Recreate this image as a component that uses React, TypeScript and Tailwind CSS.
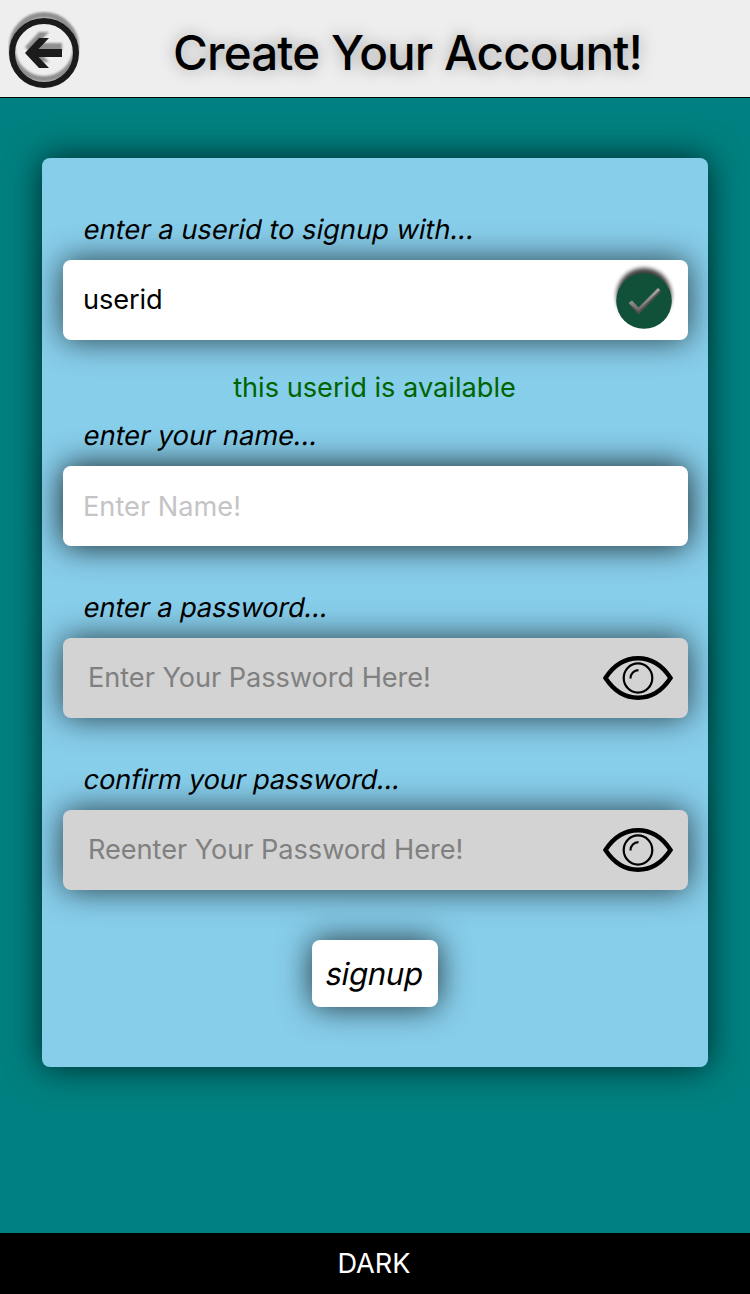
import type { ReactNode } from "react";

function BackIcon() {
  return (
    <svg className="ml-2 mt-[11px] h-[78px] w-[72px] shrink-0" viewBox="0 0 72 78" aria-label="Back">
      <defs>
        <filter id="soft" x="-20%" y="-20%" width="140%" height="140%">
          <feGaussianBlur stdDeviation="0.9" />
        </filter>
      </defs>
      <g fill="#777" stroke="#777" opacity="0.8" filter="url(#soft)">
        <circle cx="36" cy="36" r="32" fill="none" strokeWidth="6" />
        <path stroke="none" d="M17 36 31 21H41L30.500 32H54V40H30.500L41 51H31Z" />
      </g>
      <circle cx="36" cy="42" r="32" fill="none" stroke="#1b1b1b" strokeWidth="6" />
      <path fill="#1b1b1b" d="M17 42 31 27H41L30.500 38H54V46H30.500L41 57H31Z" />
    </svg>
  );
}

function CheckIcon() {
  return (
    <svg className="mr-2.5 h-[80px] w-[68px] shrink-0" viewBox="0 0 68 80" aria-label="Available">
      <defs>
        <filter id="checkShadow" x="-20%" y="-20%" width="140%" height="140%">
          <feGaussianBlur stdDeviation="2" />
        </filter>
        <linearGradient id="checkFill" x1="0.3" y1="0.2" x2="0.5" y2="1">
          <stop offset="0" stopColor="#aaa" />
          <stop offset="1" stopColor="#606060" />
        </linearGradient>
      </defs>
      <circle cx="34" cy="35.500" r="27.500" fill="#000" opacity="0.75" filter="url(#checkShadow)" />
      <circle cx="34" cy="41" r="27.800" fill="#115039" />
      <path d="M18.500 43.500 22 40.500 28.500 47.500 48 28 51.500 31.500 28.500 54.500Z" fill="#505050" />
      <path d="M18.500 43 22 40.500 28.500 47.500 48 28 50 30 28.500 51.500Z" fill="url(#checkFill)" />
    </svg>
  );
}

function EyeIcon() {
  return (
    <svg className="mr-[15px] h-11 w-[70px] shrink-0" viewBox="0 0 70 44" fill="none" stroke="#000" aria-label="Show password">
      <path d="M2.500 22C11 9 22 2.300 35 2.300S59 9 67.500 22C59 35 48 41.700 35 41.700S11 35 2.500 22Z" strokeWidth="4.400" />
      <ellipse cx="35" cy="22" rx="14.300" ry="14.600" strokeWidth="2.200" />
      <path d="M27.500 22.500C27.500 17.500 31 14.200 35.500 14.200" strokeWidth="2.200" />
    </svg>
  );
}

function Label({ children, className }: { children: ReactNode; className: string }) {
  return (
    <div className={`flex h-[62px] items-center pl-[19px] pt-0.5 text-[27.2px] ${className}`}>
      <span className="origin-[0_75%] -skew-x-[11deg]">{children}</span>
    </div>
  );
}

function Field({ children, className }: { children: ReactNode; className: string }) {
  return (
    <div className={`flex h-20 items-center justify-between rounded-[8px] text-[27.2px] ${className}`}>
      {children}
    </div>
  );
}

export default function App() {
  return (
    <div className="flex h-[1294px] w-[750px] flex-col overflow-hidden bg-[#008080] font-['Inter','Liberation_Sans',sans-serif] text-black">
      <header className="flex h-[98px] shrink-0 border-b border-black bg-[#eee]">
        <BackIcon />
        <h1 className="ml-[93px] mt-[18px] whitespace-nowrap text-[47.6px] font-medium leading-[70px] tracking-[-0.88px] [text-shadow:0_0_16px_rgba(0,0,0,0.35)]">
          Create Your Account!
        </h1>
      </header>
      <main className="flex-1 px-[42px] pt-[60px]">
        <section className="flex h-[909px] flex-col rounded-[8px] bg-[#87ceeb] pl-[21px] pr-[20px] pt-10 shadow-[0_0_34px_rgba(0,0,0,0.7)]">
          <Label className="tracking-[0.05px]">enter a userid to signup with...</Label>
          <Field className="bg-white pl-5 shadow-[0_0_32px_rgba(0,0,0,0.7)]">
            <span className="tracking-[-0.1px]">userid</span>
            <CheckIcon />
          </Field>
          <p className="mt-[25px] h-[45px] pr-0.5 text-center text-[27.2px] leading-[46px] text-[#006400]">this userid is available</p>
          <div className="-mt-[6px]">
            <Label className="">enter your name...</Label>
          </div>
          <Field className="bg-white pl-5 pt-0.5 text-[#c4c4c6] shadow-[0_0_32px_rgba(0,0,0,0.85)]">Enter Name!</Field>
          <Label className="mt-[30px] tracking-[-0.1px]">enter a password...</Label>
          <Field className="bg-[#d3d3d3] pl-[25px] tracking-[-0.06px] text-[#808080] shadow-[0_0_32px_rgba(0,0,0,0.7)]">
            Enter Your Password Here!
            <EyeIcon />
          </Field>
          <Label className="mt-[30px] tracking-[-0.17px]">confirm your password...</Label>
          <Field className="bg-[#d3d3d3] pl-[25px] tracking-[-0.06px] text-[#808080] shadow-[0_0_32px_rgba(0,0,0,0.7)]">
            Reenter Your Password Here!
            <EyeIcon />
          </Field>
          <button className="mr-0.5 mt-[50px] h-[67px] w-[126px] self-center rounded-[8px] bg-white pl-px pt-px text-[31px] tracking-[-0.2px] shadow-[0_0_32px_rgba(0,0,0,0.75)]">
            <span className="inline-block -skew-x-[11deg]">signup</span>
          </button>
        </section>
      </main>
      <footer className="flex h-[61px] shrink-0 items-center justify-center bg-black pr-0.5 pt-0.5 text-[27.2px] text-white">DARK</footer>
    </div>
  );
}
